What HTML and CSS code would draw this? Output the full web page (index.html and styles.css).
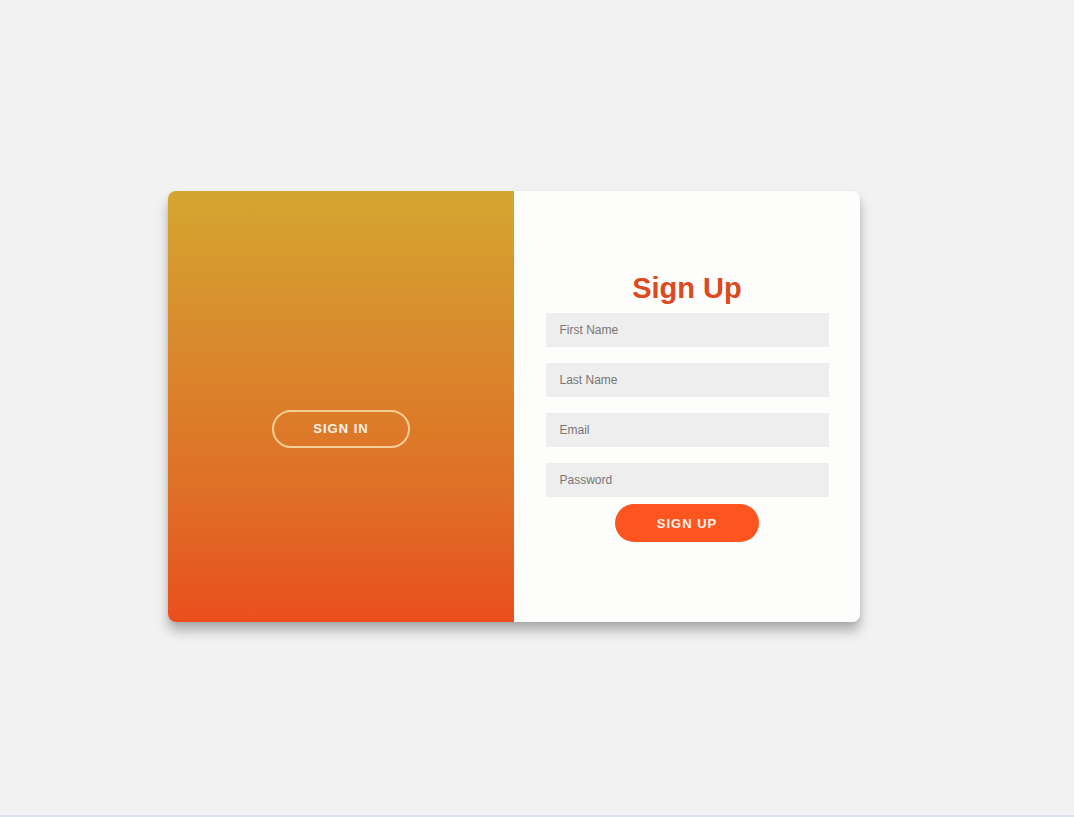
FILE: index.html
```html
<!DOCTYPE html>
<html lang="en">
<head>
<meta charset="utf-8">
<title>Sign Up</title>
<link rel="stylesheet" href="styles.css">
</head>
<body>
<div class="page">
  <div class="card">
    <div class="overlay">
      <button class="ghost-btn" type="button">SIGN IN</button>
    </div>
    <form class="form-panel">
      <h1 class="title">Sign Up</h1>
      <input class="field" type="text" placeholder="First Name">
      <input class="field" type="text" placeholder="Last Name">
      <input class="field" type="email" placeholder="Email">
      <input class="field" type="password" placeholder="Password">
      <button class="primary-btn" type="button">SIGN UP</button>
    </form>
  </div>
</div>
</body>
</html>
```
FILE: styles.css
```css
* { box-sizing: border-box; }
html, body { margin: 0; padding: 0; }
body {
  background: #f3f2f2;
  font-family: "Liberation Sans", Arial, sans-serif;
}
.page {
  height: 817px;
  padding: 191px 0 0 168px;
  border-bottom: 2px solid #dbe4ee;
}
.card {
  width: 692px;
  height: 431px;
  display: flex;
  border-radius: 8px;
  overflow: hidden;
  box-shadow: 0 9px 12px rgba(60, 60, 60, 0.35), 0 2px 4px rgba(0,0,0,0.08);
}
.overlay {
  width: 346px;
  display: flex;
  align-items: center;
  justify-content: center;
  background: linear-gradient(to bottom, #d5a630 0%, #d98a2d 35%, #df6f27 70%, #e94f1d 100%);
}
.ghost-btn {
  width: 138px;
  height: 38px;
  margin-top: 44px;
  border: 2px solid #f6cf98;
  border-radius: 19px;
  background: transparent;
  color: #fbf3ea;
  font-family: "Liberation Sans", Arial, sans-serif;
  font-weight: 700;
  font-size: 13px;
  letter-spacing: 1px;
}
.form-panel {
  width: 346px;
  background: #fdfdfb;
  display: flex;
  flex-direction: column;
  align-items: center;
  padding-top: 80px;
  margin: 0;
}
.title {
  margin: 0 0 8px;
  font-size: 29px;
  line-height: 34px;
  font-weight: 700;
  color: #dc4a1f;
}
.field {
  width: 283px;
  height: 34px;
  margin: 0 0 16px;
  border: none;
  outline: none;
  background: #eeeeee;
  padding: 0 14px;
  font-family: "Liberation Sans", Arial, sans-serif;
  font-size: 12px;
  color: #333;
}
.field:last-of-type { margin-bottom: 7px; }
.field::placeholder { color: #767676; }
.primary-btn {
  width: 144px;
  height: 38px;
  border: none;
  border-radius: 19px;
  background: #fe5520;
  color: #fff3ec;
  font-family: "Liberation Sans", Arial, sans-serif;
  font-weight: 700;
  font-size: 13px;
  letter-spacing: 1px;
}
```
